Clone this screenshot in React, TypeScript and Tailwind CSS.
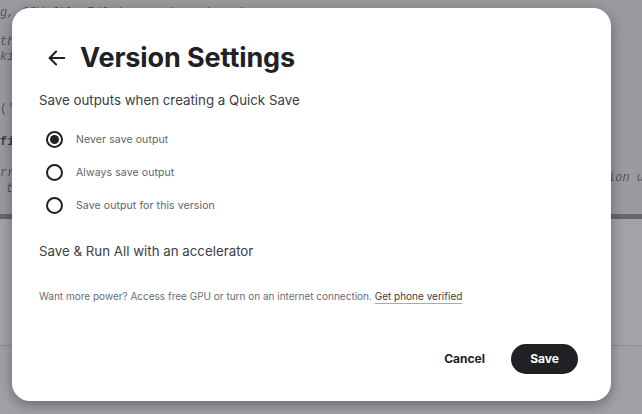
import React from "react";

const mono = { fontFamily: '"Liberation Mono", "DejaVu Sans Mono", monospace' };

function Radio({ checked, label }: { checked?: boolean; label: string }) {
  return (
    <div className="flex items-center h-[17px]">
      <div className="w-[17px] h-[17px] rounded-full border-[2px] border-[#202124] flex items-center justify-center ml-[7px]">
        {checked && <div className="w-[9px] h-[9px] rounded-full bg-[#202124]" />}
      </div>
      <span className="ml-[13px] text-[10.5px] text-[#5f6368] tracking-[0.1px]">{label}</span>
    </div>
  );
}

export default function App() {
  return (
    <div
      className="relative w-[642px] h-[414px] overflow-hidden bg-[#9a9b9f]"
      style={{ fontFamily: 'Inter, "Noto Sans", sans-serif' }}
    >
      {/* background page */}
      <div className="flex flex-col h-full">
        <div className="h-[214px] relative text-[12px] text-[#55565a] italic blur-[0.4px] whitespace-nowrap" style={mono}>
          <div className="absolute left-0 top-[4px]">g, CSV file I/O (e.g. pd.read_csv)</div>
          <div className="absolute left-0 top-[33px]">th</div>
          <div className="absolute left-0 top-[48px]">ki</div>
          <div className="absolute left-0 top-[100px] not-italic">('</div>
          <div className="absolute left-0 top-[133px] not-italic font-bold text-[#3a3b3e]">fi</div>
          <div className="absolute left-0 top-[164px]">rr</div>
          <div className="absolute left-[6px] top-[180px]">t</div>
          <div className="absolute left-[608px] top-[169px]">ion u</div>
        </div>
        <div className="h-[5px] bg-[#66676b]" />
        <div className="h-[126px] bg-[#a3a3a7]" />
        <div className="h-px bg-[#8d8e92]" />
        <div className="flex-1 bg-[#a2a2a6]" />
      </div>

      {/* modal */}
      <div className="absolute left-[12px] top-[8px] w-[599px] h-[393px] rounded-[18px] bg-white shadow-[0_4px_14px_rgba(0,0,0,0.35)] flex flex-col pl-[27px] pr-[33px]">
        <div className="flex items-center mt-[34px] h-[32px]">
          <svg width="22" height="22" viewBox="0 0 24 24" className="ml-[7px]" fill="none" stroke="#202124" strokeWidth="2.2" strokeLinecap="round" strokeLinejoin="round">
            <path d="M20 12H4" />
            <path d="M11 5l-7 7 7 7" />
          </svg>
          <h1 className="ml-[12px] text-[27px] font-bold text-[#202124] tracking-[-0.1px] leading-[32px]">Version Settings</h1>
        </div>
        <div className="mt-[17px] text-[13.3px] text-[#3c4043] leading-[18px]">Save outputs when creating a Quick Save</div>
        <div className="mt-[22px] flex flex-col gap-[16px]">
          <Radio checked label="Never save output" />
          <Radio label="Always save output" />
          <Radio label="Save output for this version" />
        </div>
        <div className="mt-[28px] text-[13.3px] text-[#3c4043] leading-[18px]">Save &amp; Run All with an accelerator</div>
        <div className="mt-[29px] text-[10px] text-[#6b6e72] leading-[14px]">
          Want more power? Access free GPU or turn on an internet connection.{" "}
          <span className="text-[#3c4043] underline underline-offset-[3px] decoration-[#aaa]">Get phone verified</span>
        </div>
        <div className="mt-auto mb-[27px] flex justify-end items-center">
          <span className="text-[12px] font-bold text-[#202124] mr-[26px]">Cancel</span>
          <div className="w-[67px] h-[30px] rounded-full bg-[#202124] text-white text-[12px] font-bold flex items-center justify-center">Save</div>
        </div>
      </div>
    </div>
  );
}
